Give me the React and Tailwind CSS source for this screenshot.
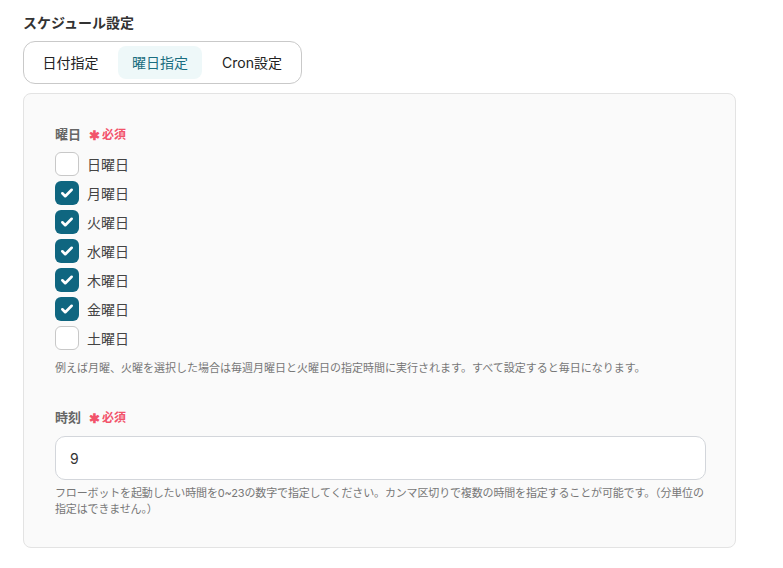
import React, { useState } from "react";

const DAYS = [
  { label: "日曜日", checked: false },
  { label: "月曜日", checked: true },
  { label: "火曜日", checked: true },
  { label: "水曜日", checked: true },
  { label: "木曜日", checked: true },
  { label: "金曜日", checked: true },
  { label: "土曜日", checked: false },
];

const Required = () => (
  <span className="ml-[8px] flex items-center text-[12px] font-bold text-[#f2536a]">
    <span className="mr-[2px] text-[13px] leading-none">✱</span>必須
  </span>
);

const App = () => {
  const [tab, setTab] = useState("weekday");
  const [days, setDays] = useState(DAYS);
  const [hour, setHour] = useState("9");

  const toggle = (i) =>
    setDays((d) => d.map((x, j) => (j === i ? { ...x, checked: !x.checked } : x)));

  const tabs = [
    { id: "date", label: "日付指定", w: "w-[85px]" },
    { id: "weekday", label: "曜日指定", w: "w-[84px]" },
    { id: "cron", label: "Cron設定", w: "w-[90px]" },
  ];

  return (
    <div
      className="min-h-screen bg-white pl-[23px] pr-[47px] pt-[13px] text-[#222]"
      style={{ fontFamily: "Inter, 'Noto Sans CJK JP', sans-serif" }}
    >
      <h2 className="text-[14px] font-bold leading-[20px] text-[#333]">スケジュール設定</h2>

      <div className="mt-[8px] inline-flex h-[43px] items-center gap-[5px] rounded-[12px] border border-[#c9c9c9] bg-white px-[4px]">
        {tabs.map((t) => (
          <button
            key={t.id}
            onClick={() => setTab(t.id)}
            className={
              tab === t.id
                ? `${t.w} h-[33px] rounded-[8px] bg-[#eef8f9] text-center text-[14px] text-[#1a6e80]`
                : `${t.w} h-[33px] rounded-[8px] text-center text-[14px] text-[#222]`
            }
          >
            {t.label}
          </button>
        ))}
      </div>

      <div className="mt-[9px] rounded-[8px] border border-[#e3e3e3] bg-[#fafafa] pl-[31px] pr-[29px] pb-[30px] pt-[31px]">
        <div className="flex h-[20px] items-center text-[13px] font-bold text-[#666]">
          曜日
          <Required />
        </div>

        <div className="mt-[7px] flex flex-col gap-[5px]">
          {days.map((d, i) => (
            <label key={d.label} className="flex h-[24px] cursor-pointer items-center gap-[8px]">
              <span
                onClick={() => toggle(i)}
                className={
                  d.checked
                    ? "flex h-[24px] w-[24px] items-center justify-center rounded-[6px] bg-[#0f6680]"
                    : "flex h-[24px] w-[24px] items-center justify-center rounded-[6px] border border-[#c8c8c8] bg-white"
                }
              >
                {d.checked && (
                  <svg width="14" height="14" viewBox="0 0 24 24" fill="none">
                    <path
                      d="M4 12.5l5 5L20 6.5"
                      stroke="white"
                      strokeWidth="4.5"
                      strokeLinecap="round"
                      strokeLinejoin="round"
                    />
                  </svg>
                )}
              </span>
              <span className="text-[14px] text-[#444]">{d.label}</span>
            </label>
          ))}
        </div>

        <p className="mt-[10px] text-[11px] leading-[16px] text-[#777]">
          例えば月曜、火曜を選択した場合は毎週月曜日と火曜日の指定時間に実行されます。すべて設定すると毎日になります。
        </p>

        <div className="mt-[32px] flex h-[20px] items-center text-[13px] font-bold text-[#666]">
          時刻
          <Required />
        </div>

        <input
          value={hour}
          onChange={(e) => setHour(e.target.value)}
          className="mt-[8px] h-[44px] w-full rounded-[10px] border border-[#d3d6db] bg-white px-[14px] text-[14px] text-[#333] outline-none"
        />

        <p className="mt-[5px] text-[11px] leading-[16px] tracking-[-0.15px] text-[#777]">
          フローボットを起動したい時間を0~23の数字で指定してください。カンマ区切りで複数の時間を指定することが可能です。（分単位の指定はできません。）
        </p>
      </div>
    </div>
  );
};

export default App;
